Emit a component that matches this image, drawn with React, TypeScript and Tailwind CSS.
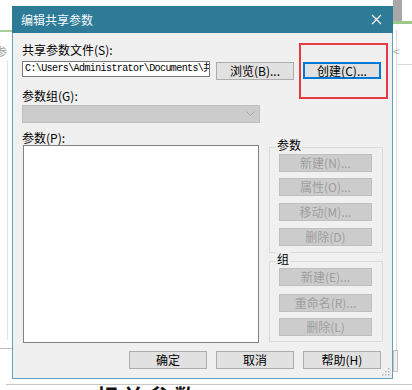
import React from "react";

function Btn({ children, disabled, className = "" }: { children: React.ReactNode; disabled?: boolean; className?: string }) {
  return (
    <div
      className={
        "h-[18px] flex items-center justify-center text-[12px] leading-[14px] border shrink-0 " +
        (disabled ? "bg-[#cccccc] border-[#bfbfbf] text-[#9e9e9e] " : "bg-[#e1e1e1] border-[#adadad] text-black ") +
        className
      }
    >
      {children}
    </div>
  );
}

export default function App() {
  return (
    <div className="relative w-[412px] h-[390px] overflow-hidden bg-white font-['Noto_Sans_CJK_SC',sans-serif] text-[12px] leading-[14px] text-black">
      {/* underlying application (behind the dialog) */}
      <div className="absolute left-0 top-[30px] w-[12px] h-[2px] bg-[#a9cf98]" />
      <div className="absolute left-[-4px] top-[44px] text-[11px] text-[#9a9a9a]">参</div>
      <div className="absolute left-[7px] top-[60px] w-px h-[280px] bg-[#e4e4e4]" />
      <div className="absolute left-0 top-[348px] w-[12px] h-px bg-[#b9b9b9]" />
      <div className="absolute left-[393px] top-0 w-[9px] h-[21px] bg-[#a8a8a8]" />
      <div className="absolute left-[393px] top-[21px] w-[19px] h-[3px] bg-[#9cc98a]" />
      <div className="absolute left-[396px] top-[30px] w-px h-[340px] bg-[#d9d9d9]" />
      <div className="absolute left-[393px] top-[44px] text-[12px] text-[#b0b0b0]">&lt;</div>
      <div className="absolute left-[396px] top-[64px] w-[16px] h-px bg-[#d9d9d9]" />
      <div className="absolute left-[393px] top-[350px] w-[5px] h-[22px] border border-[#c4c4c4] bg-[#f0f0f0]" />
      <div className="absolute left-[6px] top-[384px] w-[406px] h-px bg-[#c8c8c8]" />
      <div className="absolute left-[96px] top-[384px] text-[22px] leading-[22px] font-bold text-[#111] tracking-[4px]">相关参数</div>

      {/* dialog */}
      <div className="relative pt-[6px] pl-[12px]">
        <div className="w-[381px] h-[373px] flex flex-col">
          <div className="h-[27px] shrink-0 bg-[#2d7b97] flex items-center justify-between pl-[9px] pr-[10px] text-[12px] text-[#f4f8fa]">
            <span>编辑共享参数</span>
            <svg width="11" height="11" viewBox="0 0 11 11" className="mr-[1px]">
              <path d="M1 1 L10 10 M10 1 L1 10" stroke="#ffffff" strokeWidth="1.2" fill="none" />
            </svg>
          </div>
          <div className="relative flex-1 bg-[#f0f0f0] border-x border-b border-[#5fa3b6] pl-[9px] pr-[11px] pt-[10px] flex flex-col">
            <div className="h-[14px]">共享参数文件(S):</div>
            <div className="mt-[4px] flex items-start">
              <div className="w-[188px] h-[16px] shrink-0 bg-white border border-[#7a7a7a] overflow-hidden whitespace-nowrap pl-[2px] font-['Liberation_Mono','Noto_Sans_CJK_SC',monospace] text-[10px] leading-[14px] tracking-[-0.6px] text-black">
                {"C:\\Users\\Administrator\\Documents\\共享参数.txt"}
              </div>
              <Btn className="ml-[6px] mt-[1px] w-[78px]">浏览(B)...</Btn>
              <div className="relative ml-[9px] mt-[1px]">
                <div className="w-[78px] h-[17px] flex items-center justify-center bg-[#e1e1e1] border border-[#0078d7] shadow-[inset_0_0_0_1px_#0078d7] text-[12px]">
                  创建(C)...
                </div>
                <div className="absolute left-[-4px] top-[-19px] w-[89px] h-[56px] border-2 border-[#e63b43]" />
              </div>
            </div>
            <div className="mt-[9px] h-[14px]">参数组(G):</div>
            <div className="mt-[2px] w-[238px] h-[18px] bg-[#cccccc] border border-[#bfbfbf] flex items-center justify-end pr-[4px]">
              <svg width="9" height="6" viewBox="0 0 9 6">
                <path d="M0.5 0.5 L4.5 4.5 L8.5 0.5" stroke="#a6a6a6" strokeWidth="1" fill="none" />
              </svg>
            </div>

            <div className="mt-[8px] flex items-start">
              <div className="w-[237px] shrink-0 flex flex-col">
                <div className="h-[14px]">参数(P):</div>
                <div className="ml-px h-[198px] bg-white border border-[#828282]" />
              </div>
              <div className="ml-[10px] w-[114px] shrink-0 flex flex-col">
                <div className="relative mt-[16px] h-[106px] border border-[#dcdcdc] pt-[6px] pl-[9px] flex flex-col">
                  <div className="absolute left-[6px] top-[-10px] bg-[#f0f0f0] px-px">参数</div>
                  <Btn disabled className="w-[93px]">新建(N)...</Btn>
                  <Btn disabled className="w-[93px] mt-[6px]">属性(O)...</Btn>
                  <Btn disabled className="w-[93px] mt-[7px]">移动(M)...</Btn>
                  <Btn disabled className="w-[93px] mt-[7px]">删除(D)</Btn>
                </div>
                <div className="relative mt-[8px] h-[81px] border border-[#dcdcdc] pt-[6px] pl-[9px] flex flex-col">
                  <div className="absolute left-[6px] top-[-10px] bg-[#f0f0f0] px-px">组</div>
                  <Btn disabled className="w-[93px]">新建(E)...</Btn>
                  <Btn disabled className="w-[93px] mt-[8px]">重命名(R)...</Btn>
                  <Btn disabled className="w-[93px] mt-[6px]">删除(L)</Btn>
                </div>
              </div>
            </div>

            <div className="mt-[8px] flex justify-end gap-[9px]">
              <Btn className="w-[78px]">确定</Btn>
              <Btn className="w-[78px]">取消</Btn>
              <Btn className="w-[78px]">帮助(H)</Btn>
            </div>

            <svg className="absolute right-[2px] bottom-[2px]" width="8" height="8" viewBox="0 0 8 8">
              <rect x="6" y="0" width="1.5" height="1.5" fill="#b5b5b5" />
              <rect x="3" y="3" width="1.5" height="1.5" fill="#b5b5b5" />
              <rect x="6" y="3" width="1.5" height="1.5" fill="#b5b5b5" />
              <rect x="0" y="6" width="1.5" height="1.5" fill="#b5b5b5" />
              <rect x="3" y="6" width="1.5" height="1.5" fill="#b5b5b5" />
              <rect x="6" y="6" width="1.5" height="1.5" fill="#b5b5b5" />
            </svg>
          </div>
        </div>
      </div>
    </div>
  );
}
